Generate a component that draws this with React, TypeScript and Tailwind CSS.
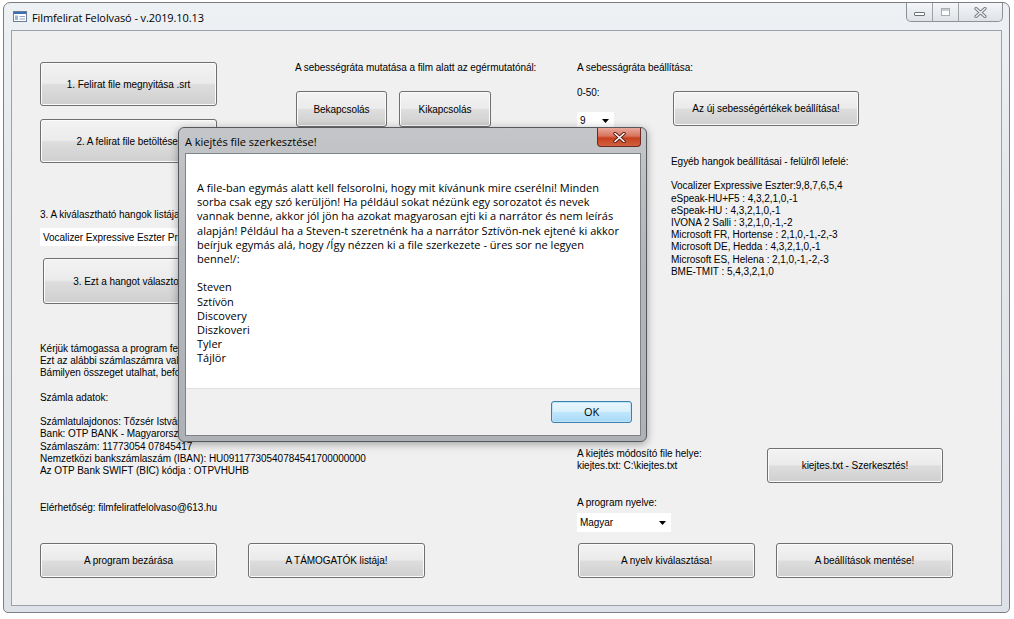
import React from "react";

const btn =
  "flex items-center justify-center rounded-[3px] border border-[#707070] bg-[linear-gradient(to_bottom,#f3f3f3_0%,#ebebeb_48%,#dddddd_52%,#cfcfcf_100%)] shadow-[inset_0_0_0_1px_#fbfbfb] text-black whitespace-nowrap";

function Button({ label, className = "" }: { label: string; className?: string }) {
  return <div className={`${btn} ${className}`}>{label}</div>;
}

function Combo({ value, className = "" }: { value: string; className?: string }) {
  return (
    <div className={`flex items-center justify-between bg-white pl-[3px] pr-[5px] overflow-hidden ${className}`}>
      <span className="whitespace-nowrap">{value}</span>
      <svg width="7" height="4" viewBox="0 0 7 4" className="shrink-0">
        <path d="M0 0h7L3.5 4z" fill="#000" />
      </svg>
    </div>
  );
}

function Line({ children }: { children?: React.ReactNode }) {
  return <div className="h-[12.2px] leading-[12.2px] whitespace-nowrap">{children}</div>;
}

const otherVoices = [
  "Vocalizer Expressive Eszter:9,8,7,6,5,4",
  "eSpeak-HU+F5 : 4,3,2,1,0,-1",
  "eSpeak-HU : 4,3,2,1,0,-1",
  "IVONA 2 Salli : 3,2,1,0,-1,-2",
  "Microsoft FR, Hortense : 2,1,0,-1,-2,-3",
  "Microsoft DE, Hedda : 4,3,2,1,0,-1",
  "Microsoft ES, Helena : 2,1,0,-1,-2,-3",
  "BME-TMIT : 5,4,3,2,1,0",
];

const dialogLines = [
  "A file-ban egymás alatt kell felsorolni, hogy mit kívánunk mire cserélni! Minden",
  "sorba csak egy szó kerüljön! Ha például sokat nézünk egy sorozatot és nevek",
  "vannak benne, akkor jól jön ha azokat magyarosan ejti ki a narrátor és nem leírás",
  "alapján! Például ha a Steven-t szeretnénk ha a narrátor Sztívön-nek ejtené ki akkor",
  "beírjuk egymás alá, hogy /Így nézzen ki a file szerkezete - üres sor ne legyen",
  "benne!/:",
  "",
  "Steven",
  "Sztívön",
  "Discovery",
  "Diszkoveri",
  "Tyler",
  "Tájlör",
];

function CaptionButtons() {
  return (
    <div className="absolute left-[902px] top-0 flex h-[19px] rounded-b-[5px] border border-t-0 border-[#8e9297] bg-[linear-gradient(to_bottom,#f4f6f8,#dfe3e8)] overflow-hidden">
      <div className="flex w-[26px] items-center justify-center border-r border-[#9ea2a7]">
        <div className="mt-[3px] h-[4px] w-[11px] rounded-[1px] border border-[#6d7176] bg-white" />
      </div>
      <div className="flex w-[26px] items-center justify-center border-r border-[#9ea2a7]">
        <div className="h-[8px] w-[9px] border border-[#a9adb2] bg-white shadow-[inset_0_2px_0_#c8ccd0]" />
      </div>
      <div className="flex w-[43px] items-center justify-center">
        <svg width="13" height="11" viewBox="0 0 13 11">
          <path d="M2 1.5l9 8M11 1.5l-9 8" stroke="#767a80" strokeWidth="3.2" strokeLinecap="round" />
          <path d="M2 1.5l9 8M11 1.5l-9 8" stroke="#f4f5f7" strokeWidth="1.3" strokeLinecap="round" />
        </svg>
      </div>
    </div>
  );
}

function Dialog() {
  return (
    <div className="absolute left-[178px] top-[127px] flex h-[315px] w-[469px] flex-col rounded-[6px] border border-[#55585c] bg-[linear-gradient(to_bottom,#c4c6c9,#b3b6ba_40%,#aeb1b5)] shadow-[0_2px_8px_rgba(0,0,0,0.35)]">
      <div className="relative h-[25px] shrink-0 pl-[6px] pt-[6px] font-['Open_Sans','Noto_Sans',sans-serif] text-[11px] leading-[16px] tracking-[0px] text-black">
        A kiejtés file szerkesztése!
        <div className="absolute right-[5px] top-0 flex h-[19px] w-[44px] items-center justify-center rounded-b-[4px] border border-t-0 border-[#6b2a22] bg-[linear-gradient(to_bottom,#e9a99b_0%,#d8735c_45%,#c7401f_55%,#d0603e_100%)]">
          <svg width="13" height="11" viewBox="0 0 13 11">
            <path d="M2 1.5l9 8M11 1.5l-9 8" stroke="#5a1a12" strokeWidth="3.4" strokeLinecap="round" />
            <path d="M2 1.5l9 8M11 1.5l-9 8" stroke="#ffffff" strokeWidth="1.6" strokeLinecap="round" />
          </svg>
        </div>
      </div>
      <div className="ml-[6px] mr-[5px] flex h-[283px] flex-col border border-[#7f8287] bg-[#f0f0f0]">
        <div className="h-[234px] bg-white pl-[11px] pt-[27px] font-['Open_Sans','Noto_Sans',sans-serif] text-[11px] tracking-[0.02px] text-black">
          {dialogLines.map((l, i) => (
            <div key={i} className="h-[14.2px] leading-[14.2px] whitespace-nowrap">
              {l}
            </div>
          ))}
        </div>
        <div className="flex flex-1 justify-end border-t border-[#dfdfdf] pr-[8px] pt-[12px]">
          <div className="flex h-[22px] w-[81px] items-center justify-center rounded-[3px] border border-[#3c7fb1] bg-[linear-gradient(to_bottom,#eaf6fd_0%,#d9f0fc_48%,#bee6fd_52%,#a7d9f5_100%)] shadow-[inset_0_0_0_1px_#bfe3f7] font-['Open_Sans','Noto_Sans',sans-serif] text-[11px] text-black">
            OK
          </div>
        </div>
      </div>
    </div>
  );
}

export default function App() {
  return (
    <div className="relative h-[619px] w-[1014px] overflow-hidden bg-white font-['Liberation_Sans',Arial,sans-serif] text-[10px] tracking-[-0.05px] text-black">
      <div className="relative ml-[3px] mt-[2px] flex h-[611px] w-[1007px] flex-col rounded-t-[7px] rounded-b-[5px] border border-[#7b7f85] bg-[linear-gradient(to_bottom,#eef1f4,#e4e8ed_30%,#dde2e8)]">
        {/* title bar */}
        <div className="flex h-[27px] shrink-0 items-start pl-[9px] pt-[7px]">
          <svg width="14" height="11" viewBox="0 0 14 11" className="mt-[1px]">
            <rect x="0.5" y="0.5" width="13" height="10" fill="#ffffff" stroke="#6a7d98" />
            <rect x="1" y="1" width="12" height="2" fill="#3b6fb6" />
            <rect x="2" y="4.5" width="3" height="4.5" fill="#9cb6d8" />
            <rect x="6.5" y="5" width="5.5" height="1" fill="#8ea3bf" />
            <rect x="6.5" y="7.5" width="5.5" height="1" fill="#8ea3bf" />
          </svg>
          <span className="ml-[5px] font-['Open_Sans','Noto_Sans',sans-serif] text-[11px] leading-[16px] tracking-[-0.1px]">
            Filmfelirat Felolvasó - v.2019.10.13
          </span>
        </div>
        <CaptionButtons />

        {/* client area */}
        <div className="mx-[7px] flex h-[576px] border border-[#9ca1a7] bg-[#f0f0f0]">
          {/* column A */}
          <div className="ml-[28px] flex w-[208px] flex-col pb-[27px]">
            <Button label="1.  Felirat file megnyitása .srt" className="mt-[31px] h-[44px] w-[177px]" />
            <Button label="2.  A felirat file betöltése!" className="mt-[13px] h-[44px] w-[177px]" />
            <div className="mt-[46px] h-[12px] leading-[12px] whitespace-nowrap">
              3.  A kiválasztható hangok listája:
            </div>
            <Combo value="Vocalizer Expressive Eszter Premium" className="mt-[7px] h-[18px] w-[182px]" />
            <Button label="3. Ezt a hangot választom!" className="ml-[3px] mt-[12px] h-[46px] w-[177px]" />
            <div className="mt-[39px]">
              <Line>Kérjük támogassa a program fejlesztését!</Line>
              <Line>Ezt az alábbi számlaszámra való utalással</Line>
              <Line>Bámilyen összeget utalhat, befolyó</Line>
              <Line />
              <Line>Számla adatok:</Line>
              <Line />
              <Line>Számlatulajdonos: Tőzsér István</Line>
              <Line>Bank: OTP BANK - Magyarország</Line>
              <Line>Számlaszám: 11773054 07845417</Line>
              <Line>Nemzetközi bankszámlaszám (IBAN): HU09117730540784541700000000</Line>
              <Line>Az OTP Bank SWIFT (BIC) kódja : OTPVHUHB</Line>
            </div>
            <div className="mt-[25px] h-[12px] leading-[12px] whitespace-nowrap">
              Elérhetőség: filmfeliratfelolvaso@613.hu
            </div>
            <Button label="A program bezárása" className="mt-auto h-[35px] w-[177px]" />
          </div>

          {/* column B */}
          <div className="flex w-[329px] flex-col pb-[27px]">
            <div className="ml-[47px] mt-[31px] h-[12px] leading-[12px] whitespace-nowrap">
              A sebességráta mutatása a film alatt az egérmutatónál:
            </div>
            <div className="ml-[48px] mt-[17px] flex gap-[12px]">
              <Button label="Bekapcsolás" className="h-[36px] w-[91px]" />
              <Button label="Kikapcsolás" className="h-[36px] w-[92px]" />
            </div>
            <Button label="A TÁMOGATÓK listája!" className="mt-auto h-[35px] w-[177px]" />
          </div>

          {/* column C */}
          <div className="flex flex-1 flex-col pb-[27px]">
            <div className="mt-[31px] h-[12px] leading-[12px] whitespace-nowrap">A sebesságráta beállítása:</div>
            <div className="mt-[13px] flex items-start">
              <div className="w-[96px]">
                <div className="h-[12px] leading-[12px]">0-50:</div>
                <Combo value="9" className="mt-[13px] h-[17px] w-[37px]" />
              </div>
              <Button label="Az új sebességértékek beállítása!" className="mt-[4px] h-[35px] w-[186px]" />
            </div>
            <div className="ml-[94px] mt-[27px]">
              <Line>Egyéb hangok beállításai - felülről lefelé:</Line>
              <Line />
              {otherVoices.map((v) => (
                <Line key={v}>{v}</Line>
              ))}
            </div>

            <div className="mt-auto flex flex-col">
              <div className="flex items-start">
                <div className="w-[190px] leading-[12px]">
                  <div className="whitespace-nowrap">A kiejtés módosító file helye:</div>
                  <div className="whitespace-nowrap">kiejtes.txt: C:\kiejtes.txt</div>
                </div>
                <Button label="kiejtes.txt - Szerkesztés!" className="h-[35px] w-[176px]" />
              </div>
              <div className="mt-[14px] h-[12px] leading-[12px]">A program nyelve:</div>
              <Combo value="Magyar" className="mt-[4px] h-[19px] w-[94px]" />
              <div className="ml-[1px] mt-[11px] flex gap-[21px]">
                <Button label="A nyelv kiválasztása!" className="h-[35px] w-[177px]" />
                <Button label="A beállítások mentése!" className="h-[35px] w-[177px]" />
              </div>
            </div>
          </div>
        </div>
      </div>
      <Dialog />
    </div>
  );
}
